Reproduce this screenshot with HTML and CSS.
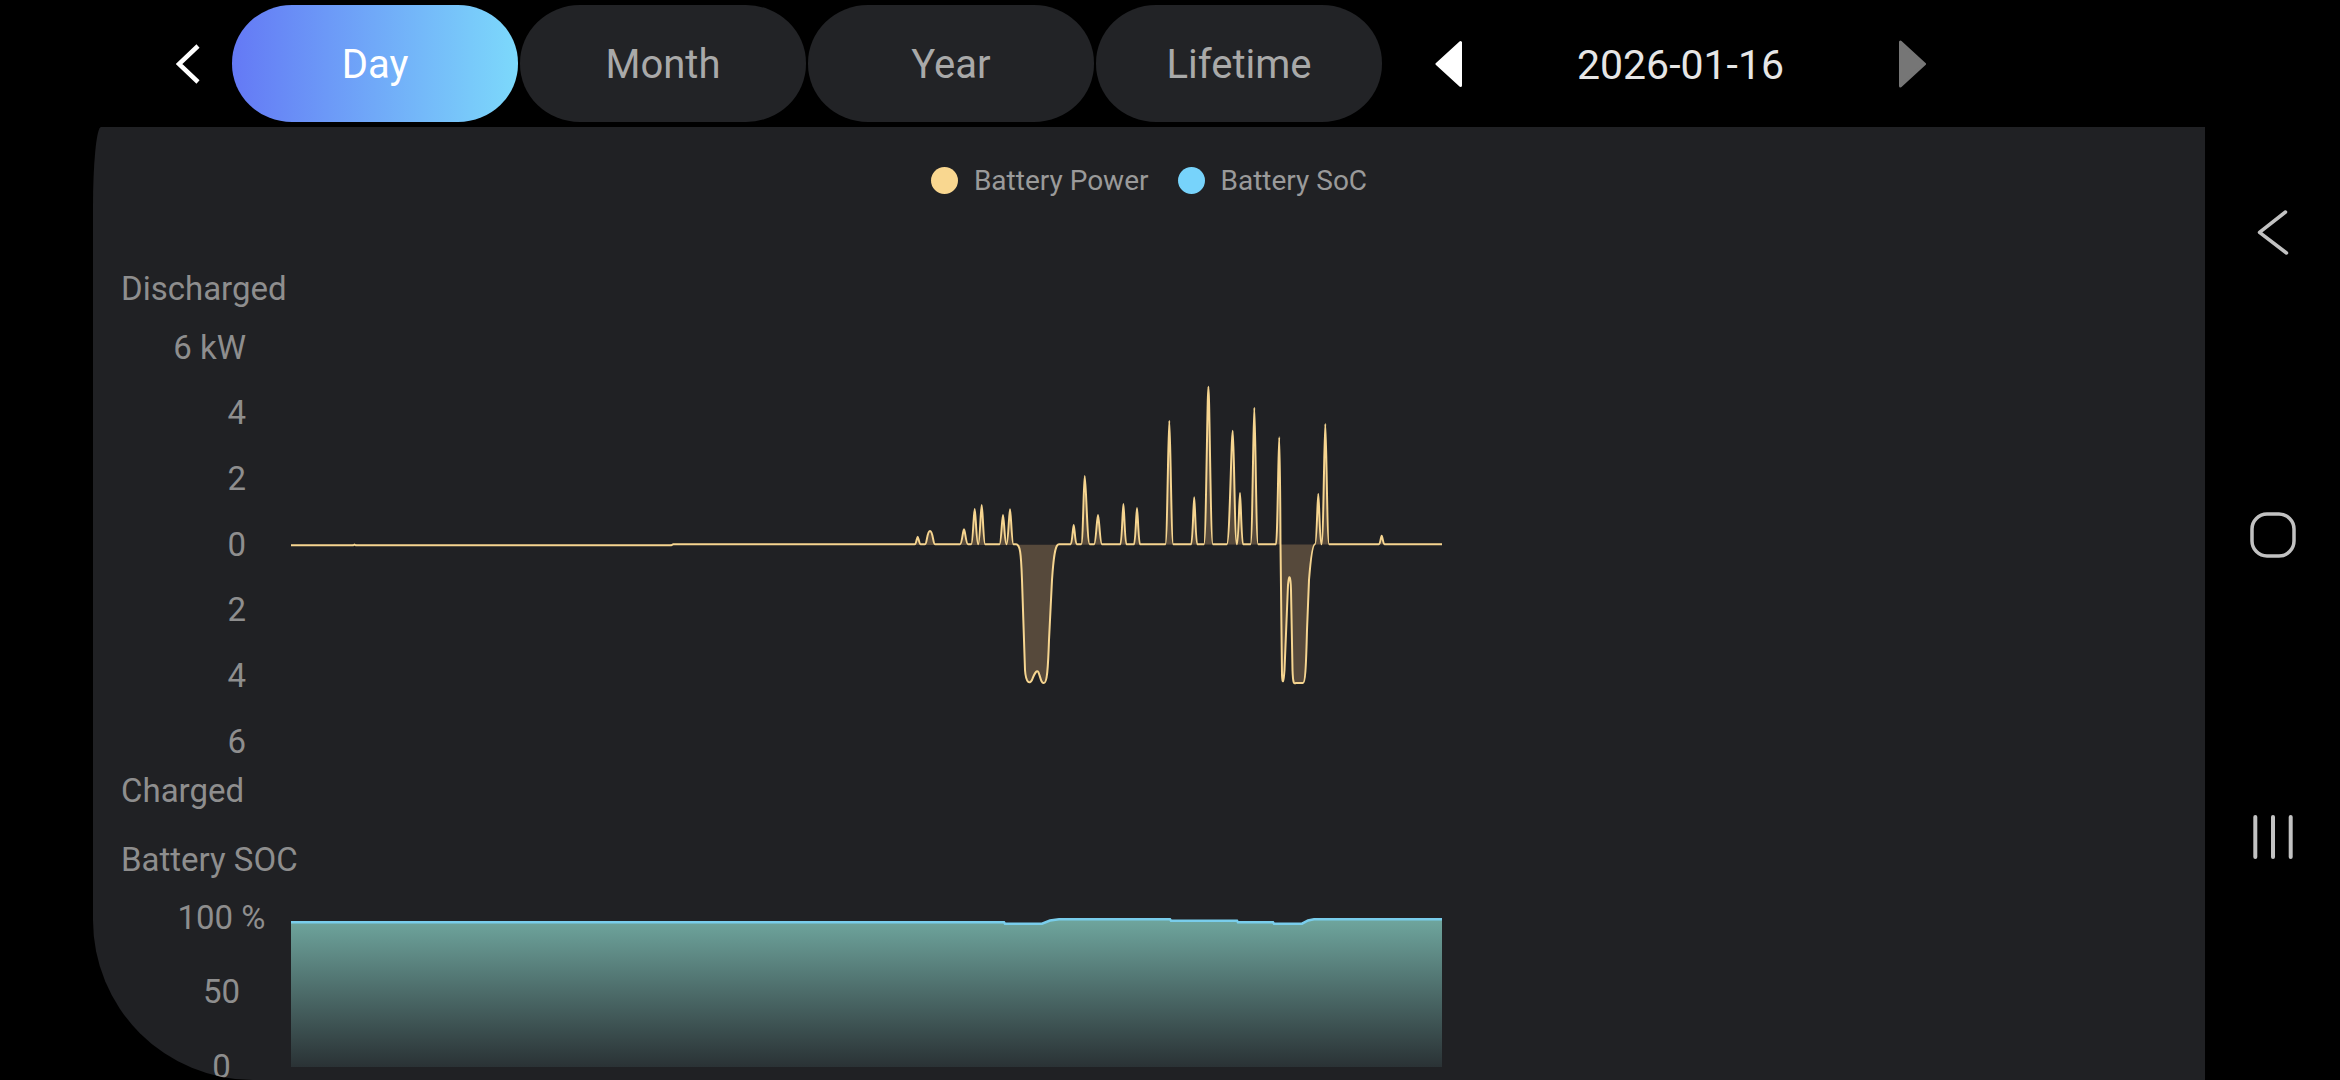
FILE: index.html
```html
<!DOCTYPE html>
<html lang="en">
<head>
<meta charset="utf-8">
<title>Battery</title>
<link rel="stylesheet" href="styles.css">
</head>
<body>
<div class="screen">
  <div class="main">
    <header class="topbar">
      <div class="back">
        <svg width="24" height="40" viewBox="0 0 24 40"><polyline points="22,2 3,20 22,38" fill="none" stroke="#ffffff" stroke-width="4.5"/></svg>
      </div>
      <nav class="tabs">
        <div class="tab tab-active">Day</div>
        <div class="tab">Month</div>
        <div class="tab">Year</div>
        <div class="tab">Lifetime</div>
      </nav>
      <div class="date-nav">
        <svg class="tri" width="27" height="48" viewBox="0 0 27 48"><polygon points="25.5,2.5 25.5,45.5 2,24" fill="#ffffff" stroke="#ffffff" stroke-width="3" stroke-linejoin="round"/></svg>
        <div class="date">2026-01-16</div>
        <svg class="tri" width="27" height="48" viewBox="0 0 27 48"><polygon points="1.5,2 1.5,46 25.5,24" fill="#767676" stroke="#767676" stroke-width="3" stroke-linejoin="round"/></svg>
      </div>
    </header>
    <section class="card">
      <div class="legend">
        <div class="legend-item"><span class="dot dot-power"></span><span>Battery Power</span></div>
        <div class="legend-item"><span class="dot dot-soc"></span><span>Battery SoC</span></div>
      </div>
      <svg class="chart" width="1367" height="587" viewBox="93 233 1367 587">
        <g class="axis">
          <text x="121" y="299.5">Discharged</text>
          <text x="246" y="358.5" text-anchor="end">6 kW</text>
          <text x="246" y="424.3" text-anchor="end">4</text>
          <text x="246" y="490" text-anchor="end">2</text>
          <text x="246" y="555.7" text-anchor="end">0</text>
          <text x="246" y="621.4" text-anchor="end">2</text>
          <text x="246" y="687.1" text-anchor="end">4</text>
          <text x="246" y="752.5" text-anchor="end">6</text>
          <text x="121" y="801.7">Charged</text>
        </g>
        <path class="power-fill" d="M291,545.3 L353,545.3 L354.5,544.6 L356,545.3 L671,545.3 L673,544.3 L914.7,544.3 C916.2,544.3 917,536.7 917.7,536.7 C918.4,536.7 919.2,544.3 920.7,544.3 L925,544.3 C927,544.3 927,531 930,531 C933,531 933,544.3 935,544.3 L960,544.3 C962,544.3 963,529.3 964,529.3 C965,529.3 966,544.3 968,544.3 L971.2,544.3 C972.9,544.3 973.8,509 974.7,509 C975.6,509 976.4,544.3 978.2,544.3 C979.9,544.3 980.8,505 981.7,505 C982.6,505 983.4,544.3 985.2,544.3 L999.5,544.3 C1001.2,544.3 1002.1,515 1003,515 C1003.9,515 1004.7,544.3 1006.5,544.3 C1008.2,544.3 1009.1,509.3 1010,509.3 C1010.9,509.3 1011.7,544.3 1013.5,544.3 L1016,544.3 C1020,544.3 1021,552 1022,580 L1025,670 C1026,684 1030,684 1032,680 C1035,672 1037,670 1038.3,672 C1040,675 1041,684 1044,683 C1047,683 1048,670 1049,640 L1052,580 C1054,550 1056,544.3 1059,544.3 L1070.7,544.3 C1072.2,544.3 1073,525 1073.7,525 C1074.4,525 1075.2,544.3 1076.7,544.3 L1081.2,544.3 C1083,544.3 1083.8,476 1084.7,476 C1085.9,476 1087.2,544.3 1089.7,544.3 L1094,544.3 C1096,544.3 1097,515 1098,515 C1099,515 1100,544.3 1102,544.3 L1120.4,544.3 C1121.9,544.3 1122.7,504 1123.4,504 C1124.1,504 1124.9,544.3 1126.4,544.3 L1134,544.3 C1135.5,544.3 1136.3,508 1137,508 C1137.7,508 1138.5,544.3 1140,544.3 L1165.3,544.3 C1167.3,544.3 1168.3,420.7 1169.3,420.7 C1170.3,420.7 1171.3,544.3 1173.3,544.3 L1191.2,544.3 C1192.7,544.3 1193.5,497.3 1194.2,497.3 C1194.9,497.3 1195.7,544.3 1197.2,544.3 L1203.9,544.3 C1206.1,544.3 1207.3,386.7 1208.4,386.7 C1209.5,386.7 1210.6,544.3 1212.9,544.3 L1226.8,544.3 C1229.8,544.3 1231.3,430.7 1232.8,430.7 C1233.8,430.7 1234.8,544.3 1236.8,544.3 L1237,544.3 C1238.5,544.3 1239.3,493 1240,493 C1240.7,493 1241.5,544.3 1243,544.3 L1250.5,544.3 C1252.4,544.3 1253.4,407.7 1254.3,407.7 C1255.2,407.7 1256.2,544.3 1258.1,544.3 L1276,544.3 C1277.5,544.3 1278.5,437.3 1279.2,437.3 C1279.8,437.3 1280.3,500 1280.5,544.3 L1282,675 C1282.5,684 1283.5,684 1284.5,670 L1288,585 C1289,574 1290.5,574 1291,590 L1292.5,670 C1293,684 1294,684 1296,683 L1303,683 C1305,683 1306,670 1307,630 L1309,580 C1311,555 1313,544.3 1315,544.3 C1316.8,544.3 1317.5,494 1318.3,494 C1319,494 1319.8,544.3 1321.3,544.3 L1321.5,544.3 C1323.4,544.3 1324.4,424 1325.3,424 C1326.2,424 1327.2,544.3 1329.1,544.3 L1378.9,544.3 C1380.3,544.3 1381,535.7 1381.7,535.7 C1382.4,535.7 1383.1,544.3 1384.5,544.3 L1442,544.3 Z"/>
        <path class="power-line" d="M291,545.3 L353,545.3 L354.5,544.6 L356,545.3 L671,545.3 L673,544.3 L914.7,544.3 C916.2,544.3 917,536.7 917.7,536.7 C918.4,536.7 919.2,544.3 920.7,544.3 L925,544.3 C927,544.3 927,531 930,531 C933,531 933,544.3 935,544.3 L960,544.3 C962,544.3 963,529.3 964,529.3 C965,529.3 966,544.3 968,544.3 L971.2,544.3 C972.9,544.3 973.8,509 974.7,509 C975.6,509 976.4,544.3 978.2,544.3 C979.9,544.3 980.8,505 981.7,505 C982.6,505 983.4,544.3 985.2,544.3 L999.5,544.3 C1001.2,544.3 1002.1,515 1003,515 C1003.9,515 1004.7,544.3 1006.5,544.3 C1008.2,544.3 1009.1,509.3 1010,509.3 C1010.9,509.3 1011.7,544.3 1013.5,544.3 L1016,544.3 C1020,544.3 1021,552 1022,580 L1025,670 C1026,684 1030,684 1032,680 C1035,672 1037,670 1038.3,672 C1040,675 1041,684 1044,683 C1047,683 1048,670 1049,640 L1052,580 C1054,550 1056,544.3 1059,544.3 L1070.7,544.3 C1072.2,544.3 1073,525 1073.7,525 C1074.4,525 1075.2,544.3 1076.7,544.3 L1081.2,544.3 C1083,544.3 1083.8,476 1084.7,476 C1085.9,476 1087.2,544.3 1089.7,544.3 L1094,544.3 C1096,544.3 1097,515 1098,515 C1099,515 1100,544.3 1102,544.3 L1120.4,544.3 C1121.9,544.3 1122.7,504 1123.4,504 C1124.1,504 1124.9,544.3 1126.4,544.3 L1134,544.3 C1135.5,544.3 1136.3,508 1137,508 C1137.7,508 1138.5,544.3 1140,544.3 L1165.3,544.3 C1167.3,544.3 1168.3,420.7 1169.3,420.7 C1170.3,420.7 1171.3,544.3 1173.3,544.3 L1191.2,544.3 C1192.7,544.3 1193.5,497.3 1194.2,497.3 C1194.9,497.3 1195.7,544.3 1197.2,544.3 L1203.9,544.3 C1206.1,544.3 1207.3,386.7 1208.4,386.7 C1209.5,386.7 1210.6,544.3 1212.9,544.3 L1226.8,544.3 C1229.8,544.3 1231.3,430.7 1232.8,430.7 C1233.8,430.7 1234.8,544.3 1236.8,544.3 L1237,544.3 C1238.5,544.3 1239.3,493 1240,493 C1240.7,493 1241.5,544.3 1243,544.3 L1250.5,544.3 C1252.4,544.3 1253.4,407.7 1254.3,407.7 C1255.2,407.7 1256.2,544.3 1258.1,544.3 L1276,544.3 C1277.5,544.3 1278.5,437.3 1279.2,437.3 C1279.8,437.3 1280.3,500 1280.5,544.3 L1282,675 C1282.5,684 1283.5,684 1284.5,670 L1288,585 C1289,574 1290.5,574 1291,590 L1292.5,670 C1293,684 1294,684 1296,683 L1303,683 C1305,683 1306,670 1307,630 L1309,580 C1311,555 1313,544.3 1315,544.3 C1316.8,544.3 1317.5,494 1318.3,494 C1319,494 1319.8,544.3 1321.3,544.3 L1321.5,544.3 C1323.4,544.3 1324.4,424 1325.3,424 C1326.2,424 1327.2,544.3 1329.1,544.3 L1378.9,544.3 C1380.3,544.3 1381,535.7 1381.7,535.7 C1382.4,535.7 1383.1,544.3 1384.5,544.3 L1442,544.3"/>
      </svg>
      <svg class="chart" width="1367" height="260" viewBox="93 820 1367 260">
        <defs>
          <linearGradient id="socGrad" gradientUnits="userSpaceOnUse" x1="0" y1="919" x2="0" y2="1067">
            <stop offset="0" stop-color="#6fa69e"/>
            <stop offset="0.5" stop-color="#4c6b69"/>
            <stop offset="1" stop-color="#2a3235"/>
          </linearGradient>
        </defs>
        <g class="axis">
          <text x="121" y="870.7">Battery SOC</text>
          <text x="221.5" y="928.8" text-anchor="middle">100 %</text>
          <text x="221.5" y="1003" text-anchor="middle">50</text>
          <text x="221.5" y="1078" text-anchor="middle">0</text>
        </g>
        <path fill="url(#socGrad)" d="M291,922.3 L1004,922.3 L1005,923.7 L1042,923.7 L1050,920.5 L1059,919.3 L1170,919.3 L1171,920.7 L1237,920.7 L1238,922.3 L1273,922.3 L1274,923.7 L1302,923.7 L1308,920.5 L1314,919.3 L1442,919.3 L1442,1067 L291,1067 Z"/>
        <path class="soc-line" d="M291,922.3 L1004,922.3 L1005,923.7 L1042,923.7 L1050,920.5 L1059,919.3 L1170,919.3 L1171,920.7 L1237,920.7 L1238,922.3 L1273,922.3 L1274,923.7 L1302,923.7 L1308,920.5 L1314,919.3 L1442,919.3"/>
      </svg>
    </section>
  </div>
  <aside class="navbar">
    <svg class="nav-icon" width="46" height="46" viewBox="0 0 46 46"><polyline points="35.5,2 9.5,22.4 36.5,43" fill="none"/></svg>
    <svg class="nav-icon" width="46" height="46" viewBox="0 0 46 46"><rect x="2" y="2" width="42" height="42" rx="15" fill="none"/></svg>
    <svg class="nav-icon" width="46" height="46" viewBox="0 0 46 46"><line x1="5.3" y1="3" x2="5.3" y2="43"/><line x1="23" y1="3" x2="23" y2="43"/><line x1="40.7" y1="3" x2="40.7" y2="43"/></svg>
  </aside>
</div>
</body>
</html>
```

FILE: styles.css
```css
* {
  box-sizing: border-box;
  margin: 0;
  padding: 0;
}

html,
body {
  width: 2340px;
  height: 1080px;
  background: #000000;
  overflow: hidden;
}

body {
  font-family: Roboto, "Noto Sans", "Liberation Sans", sans-serif;
}

.screen {
  display: flex;
  width: 2340px;
  height: 1080px;
}

.main {
  width: 2205px;
  display: flex;
  flex-direction: column;
}

.topbar {
  height: 127px;
  flex-shrink: 0;
  display: flex;
  align-items: center;
  padding-left: 176px;
}

.back {
  width: 24px;
  height: 40px;
  margin-right: 32px;
}

.back svg {
  display: block;
}

.tabs {
  display: flex;
  gap: 2px;
}

.tab {
  width: 286px;
  height: 117px;
  padding-top: 2px;
  border-radius: 60px / 58px;
  background: #222326;
  color: #a9a9a9;
  font-size: 40px;
  display: flex;
  align-items: center;
  justify-content: center;
}

.tab-active {
  background: linear-gradient(90deg, #6479f5 0%, #7cd9fb 100%);
  color: #ffffff;
}

.date-nav {
  display: flex;
  align-items: center;
  margin-left: 53px;
}

.tri {
  display: block;
}

.date {
  width: 437px;
  padding-top: 2px;
  text-align: center;
  font-size: 41px;
  color: #e6e6e6;
}

.card {
  margin-left: 93px;
  flex: 1;
  background: #202124;
  border-top-left-radius: 8px 80px;
  border-bottom-left-radius: 160px;
  overflow: hidden;
}

.legend {
  height: 106px;
  display: flex;
  align-items: center;
  justify-content: center;
  gap: 29px;
}

.legend-item {
  display: flex;
  align-items: center;
  gap: 16px;
  font-size: 28px;
  color: #9a9a9a;
}

.dot {
  width: 27px;
  height: 27px;
  border-radius: 50%;
}

.dot-power {
  background: #f9d790;
}

.dot-soc {
  background: #77d3fb;
}

.chart {
  display: block;
}

.axis {
  font-family: Roboto, "Noto Sans", sans-serif;
  font-size: 33px;
  fill: #8e8e8e;
}

.power-fill {
  fill: #56493b;
}

.power-line {
  fill: none;
  stroke: #f6d590;
  stroke-width: 2;
  stroke-linejoin: round;
}

.soc-line {
  fill: none;
  stroke: #79cdeb;
  stroke-width: 2.5;
}

.navbar {
  width: 135px;
  display: flex;
  flex-direction: column;
  align-items: center;
  padding-top: 210px;
  gap: 256px;
}

.nav-icon {
  display: block;
  stroke: #c2c2c2;
  stroke-width: 3.5;
  stroke-linecap: round;
  stroke-linejoin: round;
}

.nav-icon line {
  stroke-width: 4;
}
```
